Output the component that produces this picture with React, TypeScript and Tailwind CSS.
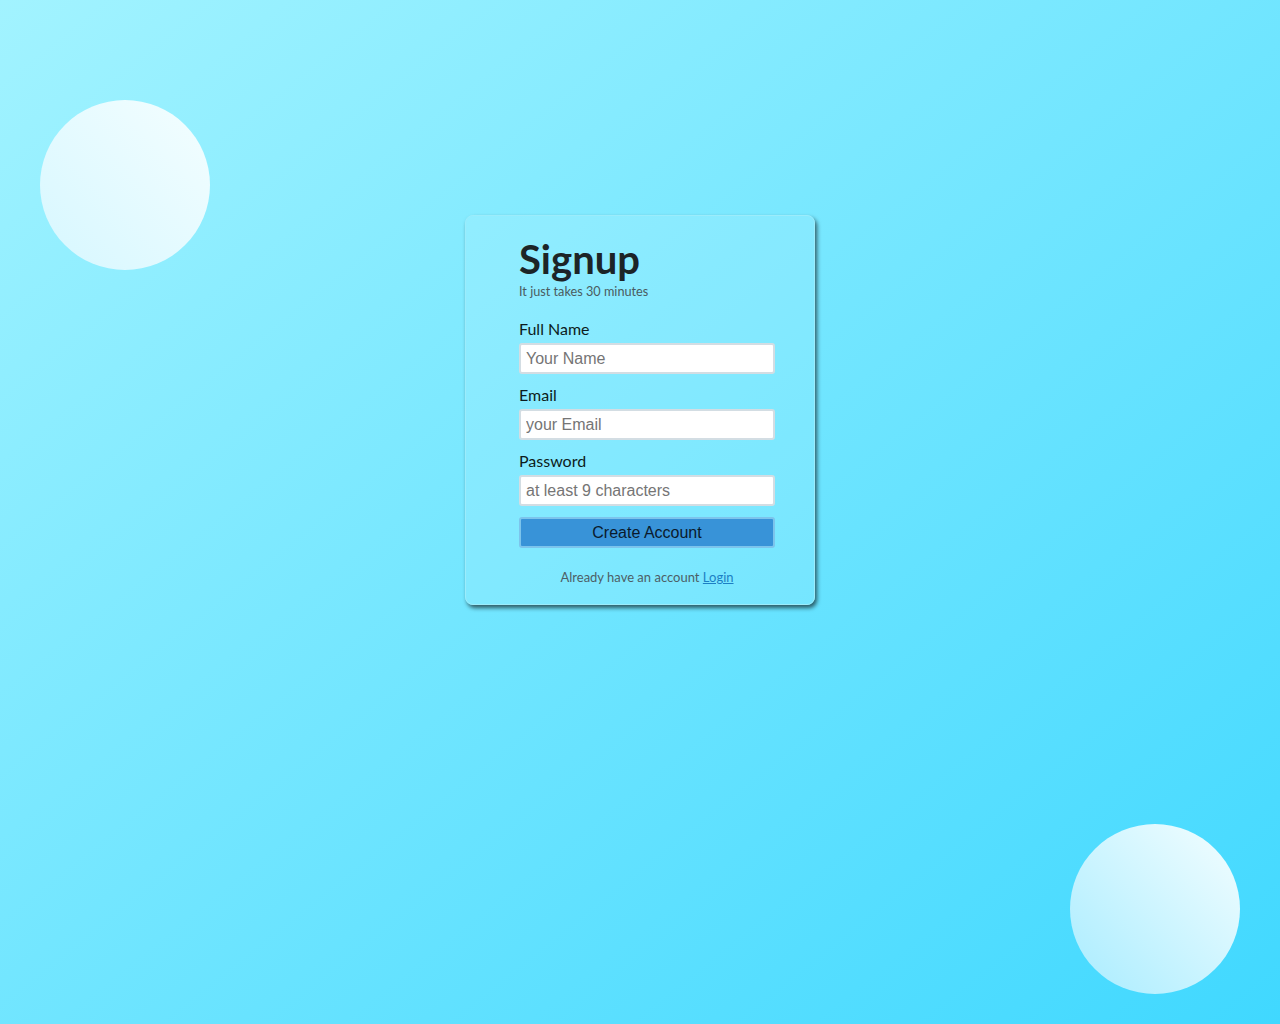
export default function App() {
  return (
    <div className="relative min-h-screen w-full overflow-hidden bg-[linear-gradient(to_bottom_right,#a2f3ff,#40d8ff)] font-['Lato','Noto_Sans',sans-serif]">
      {/* decorative circles */}
      <div className="absolute left-[40px] top-[100px] h-[170px] w-[170px] rounded-full bg-[linear-gradient(to_top_right,#d6f7ff,#f4feff)]" />
      <div className="absolute left-[1070px] top-[824px] h-[170px] w-[170px] rounded-full bg-[linear-gradient(to_top_right,#a8ecff,#f4feff)]" />

      <div className="flex justify-center pt-[215px]">
        <div className="w-[350px] rounded-lg border border-[#9cecfb] bg-white/10 shadow-[2px_3px_4px_rgba(0,0,0,0.6)] pl-[53px] pb-[17px] pt-[19px]">
          <div className="w-[256px]">
            <h1 className="text-[40px] leading-[48px] font-bold text-[#1c2427]">Signup</h1>
            <p className="text-[12.7px] leading-4 text-[#4a5b60]">It just takes 30 minutes</p>

            <form className="mt-[20px]" onSubmit={(e) => e.preventDefault()}>
              <label className="block text-[16px] leading-5 text-[#0d1c20]">Full Name</label>
              <input
                type="text"
                placeholder="Your Name"
                className="mt-[4px] block h-[31px] w-[256px] rounded-[3px] border-2 border-[#d3dde3] bg-white px-[5px] font-['Liberation_Sans',Arial,sans-serif] text-[16px] text-[#222] placeholder:text-[#757575] outline-none"
              />
              <label className="mt-[11px] block text-[16px] leading-5 text-[#0d1c20]">Email</label>
              <input
                type="email"
                placeholder="your Email"
                className="mt-[4px] block h-[31px] w-[256px] rounded-[3px] border-2 border-[#d3dde3] bg-white px-[5px] font-['Liberation_Sans',Arial,sans-serif] text-[16px] text-[#222] placeholder:text-[#757575] outline-none"
              />
              <label className="mt-[11px] block text-[16px] leading-5 text-[#0d1c20]">Password</label>
              <input
                type="password"
                placeholder="at least 9 characters"
                className="mt-[4px] block h-[31px] w-[256px] rounded-[3px] border-2 border-[#d3dde3] bg-white px-[5px] font-['Liberation_Sans',Arial,sans-serif] text-[16px] text-[#222] placeholder:text-[#757575] outline-none"
              />
              <button
                type="submit"
                className="mt-[11px] block h-[31px] w-[256px] rounded-[3px] border-2 border-[#7cc4ec] bg-[#3893d8] font-['Liberation_Sans',Arial,sans-serif] text-[16px] text-[#0a1a2c]"
              >
                Create Account
              </button>
            </form>

            <p className="mt-[19px] text-center text-[13px] leading-5 text-[#4d5f66]">
              Already have an account{' '}
              <a href="#" className="text-[#1c7fc4] underline">Login</a>
            </p>
          </div>
        </div>
      </div>
    </div>
  );
}
